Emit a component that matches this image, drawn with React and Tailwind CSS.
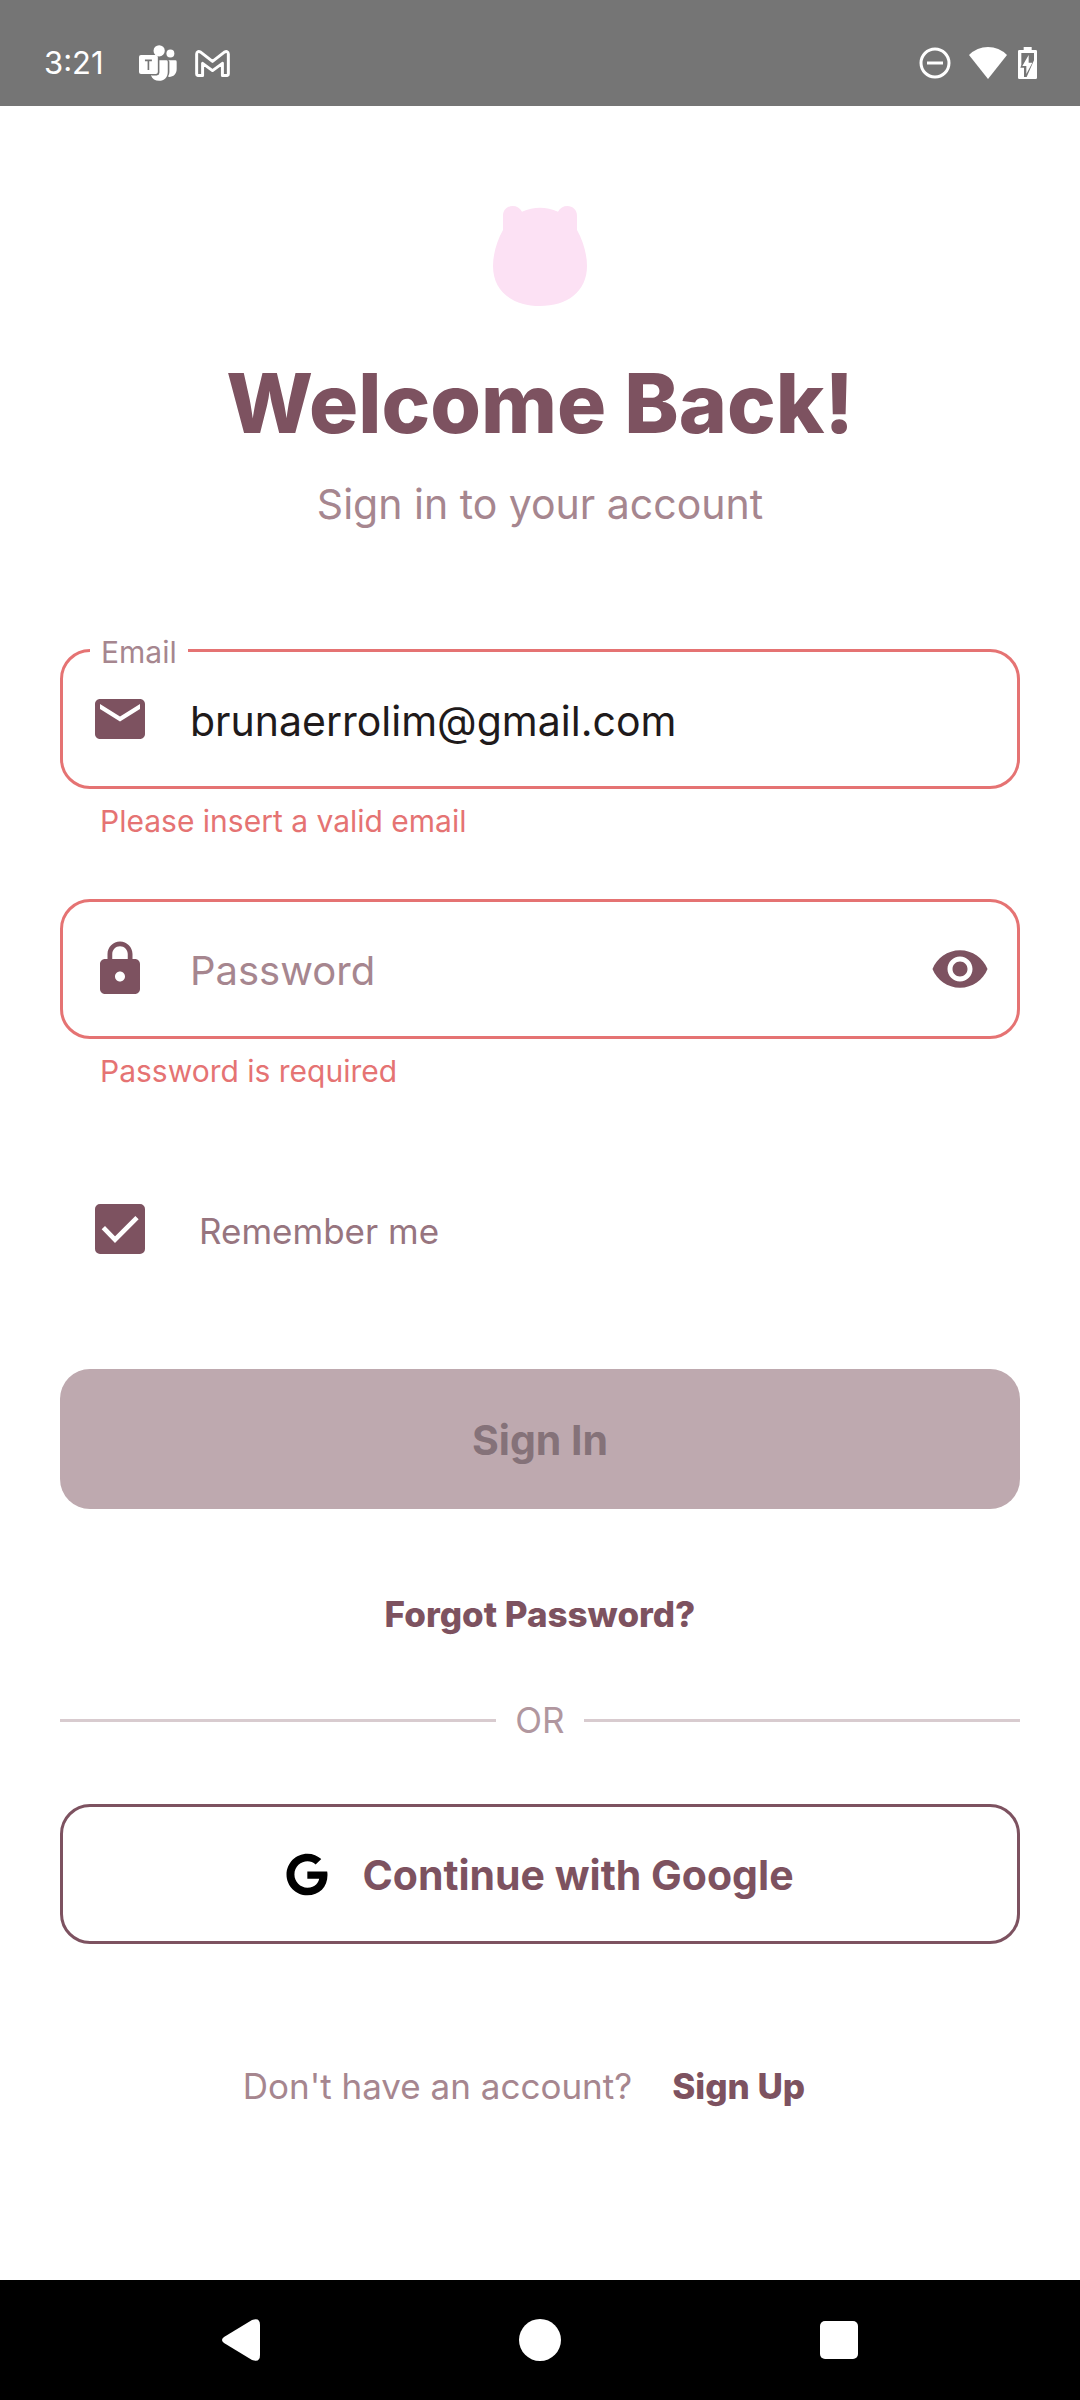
import { useState } from "react";
import { MdEmail, MdLock, MdVisibility } from "react-icons/md";
import { FaGoogle } from "react-icons/fa";

function TeamsIcon() {
  return (
    <svg viewBox="0 0 115 108" className="h-9 w-[38px]" aria-hidden="true">
      <g fill="#fff">
        <circle cx="61" cy="17" r="17" />
        <circle cx="95" cy="25" r="12" />
        <path d="M88 46h22q4 0 4 4v22c0 14-9 24-23 24l-3-1q4-6 4-14V50q0-3-4-4z" />
        <path d="M61 46h22q4 0 4 4v31c0 16-11 27-26 27-12 0-21-6-25-17h17q8 0 8-8z" />
        <rect x="0" y="30" width="57" height="57" rx="6" />
      </g>
      <path d="M60 36v48q0 6-6 6H38" fill="none" stroke="#757575" strokeWidth="3" />
      <path d="M18 46h21M28.500 46v29" fill="none" stroke="#757575" strokeWidth="5" />
    </svg>
  );
}

function MailOutlineIcon() {
  return (
    <svg viewBox="0 0 106 81" className="h-[27px] w-[35px]" aria-hidden="true">
      <path
        d="M5 72V12Q6 1 17 6l36 28L89 6q11-5 12 6v60q0 5-5 5H83V40L53 62 23 40v37H10q-5 0-5-5z"
        fill="none"
        stroke="#fff"
        strokeWidth="9"
        strokeLinejoin="round"
      />
    </svg>
  );
}

function StatusBar() {
  return (
    <header className="flex h-[106px] items-center justify-between bg-[#757575] pr-[43px] pl-11 pt-5 text-white">
      <div className="flex items-center">
        <time className="w-[95px] text-[31px] leading-9">3:21</time>
        <TeamsIcon />
        <span className="ml-[18px]">
          <MailOutlineIcon />
        </span>
      </div>
      <div className="flex items-center">
        <svg viewBox="0 0 32 32" className="h-8 w-8" aria-hidden="true">
          <circle cx="16" cy="16" r="14" fill="none" stroke="#fff" strokeWidth="3" />
          <path d="M8 16h16" stroke="#fff" strokeWidth="3" />
        </svg>
        <svg viewBox="0 0 38 32" className="ml-[18px] h-8 w-[38px]" aria-hidden="true">
          <path d="M0 8Q8 0 19 0t19 8L19 32z" fill="#fff" />
        </svg>
        <svg viewBox="0 0 57 96" className="ml-[11px] h-8 w-[19px]" aria-hidden="true">
          <path d="M17 0h24v9h12q4 0 4 4v79q0 4-4 4H4q-4 0-4-4V13q0-4 4-4h13z" fill="#fff" />
          <path d="M10 18h38v22L26 90h-8V62H7l3-8z" fill="#757575" />
          <path d="M32 24 13 57h12v24l18-34H32z" fill="#fff" />
        </svg>
      </div>
    </header>
  );
}

function Mascot() {
  return (
    <svg viewBox="0 0 282 300" className="h-[100px] w-[94px]" aria-hidden="true">
      <path
        d="M30 72V29C30 12 43 0 59 0c12 0 22 6 28 17Q114 5 141 5t54 12C201 6 211 0 223 0c16 0 29 12 29 29v43c18 31 30 72 30 108 0 78-61 120-141 120S0 258 0 180C0 144 12 103 30 72z"
        fill="#fce1f4"
      />
    </svg>
  );
}

function Field({ id, label, icon: Icon, error, trailing, ...input }) {
  return (
    <div>
      <div className="relative flex h-[140px] items-center rounded-[30px] border-3 border-[#e57373] px-[27px]">
        <label
          htmlFor={id}
          className={
            input.value
              ? "absolute -top-[18px] left-[27px] bg-white px-[11px] text-[30px] leading-9 text-[#a6868f]"
              : "absolute left-[127px] pt-1 text-[40px] leading-12 text-[#a6868f]"
          }
        >
          {label}
        </label>
        <Icon className="h-[60px] w-[60px] shrink-0 text-[#7d5260]" aria-hidden="true" />
        <input
          id={id}
          className="ml-10 min-w-0 flex-1 bg-transparent pt-1 text-[41px] leading-12 text-[#201a1b] outline-none"
          aria-invalid="true"
          aria-describedby={id + "-error"}
          {...input}
        />
        {trailing}
      </div>
      <p id={id + "-error"} className="mt-[14px] ml-10 text-[30px] leading-9 text-[#e57373]">
        {error}
      </p>
    </div>
  );
}

export default function App() {
  const [email, setEmail] = useState("brunaerrolim@gmail.com");
  const [password, setPassword] = useState("");
  const [shown, setShown] = useState(false);
  const [remember, setRemember] = useState(true);

  return (
    <div className="flex min-h-screen flex-col bg-white font-['Inter',sans-serif] text-[#7d5260]">
      <StatusBar />
      <main className="flex flex-1 flex-col px-[60px] pt-[100px]">
        <div className="flex flex-col items-center">
          <Mascot />
          <h1 className="mt-[50px] text-[82px] leading-24 font-extrabold">Welcome Back!</h1>
          <p className="mt-7 text-[41px] leading-12 text-[#a6868f]">Sign in to your account</p>
        </div>

        <form className="mt-[121px] flex flex-col" noValidate onSubmit={(e) => e.preventDefault()}>
          <div className="flex flex-col gap-[60px]">
            <Field
              id="email"
              type="email"
              label="Email"
              icon={MdEmail}
              value={email}
              onChange={(e) => setEmail(e.target.value)}
              error="Please insert a valid email"
            />
            <Field
              id="password"
              type={shown ? "text" : "password"}
              label="Password"
              icon={MdLock}
              value={password}
              onChange={(e) => setPassword(e.target.value)}
              error="Password is required"
              trailing={
                <button type="button" aria-label="Show password" onClick={() => setShown(!shown)}>
                  <MdVisibility className="h-[60px] w-[60px]" />
                </button>
              }
            />
          </div>

          <div className="mt-[115px] flex items-center pl-[35px]">
            <span className="relative flex h-[50px] w-[50px]">
              <input
                id="remember"
                type="checkbox"
                checked={remember}
                onChange={(e) => setRemember(e.target.checked)}
                className="peer h-[50px] w-[50px] appearance-none rounded-[5px] border-4 border-[#7d5260] checked:bg-[#7d5260]"
              />
              <svg
                viewBox="0 0 150 150"
                className="pointer-events-none absolute inset-0 hidden peer-checked:block"
                aria-hidden="true"
              >
                <path d="M25 71l35 36 66-66" fill="none" stroke="#fff" strokeWidth="14" />
              </svg>
            </span>
            <label htmlFor="remember" className="pt-1 pl-[54px] text-[35px] leading-11 text-[#97757f]">
              Remember me
            </label>
          </div>

          <button
            type="submit"
            disabled
            className="mt-[115px] h-[140px] rounded-[30px] bg-[#bea9af] pt-1 text-[41px] font-bold text-[#857279]"
          >
            Sign In
          </button>
        </form>

        <a href="#forgot" className="mt-[83px] self-center text-[35px] leading-11 font-extrabold">
          Forgot Password?
        </a>

        <div className="mt-[62px] flex items-center">
          <hr className="flex-1 border-t-3 border-[#d8cbcf]" />
          <span className="w-[88px] text-center text-[35px] leading-11 text-[#b1979f]">OR</span>
          <hr className="flex-1 border-t-3 border-[#d8cbcf]" />
        </div>

        <button
          type="button"
          className="mt-[62px] flex h-[140px] items-center justify-center gap-[34px] rounded-[30px] border-3 border-[#7d5260] text-[41px] font-bold"
        >
          <FaGoogle className="h-[43px] w-[42px] text-black" aria-hidden="true" />
          <span className="pt-1">Continue with Google</span>
        </button>

        <p className="mt-[120px] flex justify-center pr-8 text-[35px] leading-11 text-[#a6868f]">
          Don't have an account?
          <a href="#signup" className="ml-10 font-extrabold text-[#7d5260]">
            Sign Up
          </a>
        </p>
      </main>

      <nav className="grid h-[120px] grid-cols-3 place-items-center bg-black px-[92px]">
        <button type="button" aria-label="Back">
          <svg viewBox="0 0 38 42" className="h-[42px] w-[38px]" aria-hidden="true">
            <path d="M2 18 30 1q8-3 8 5v30q0 8-8 5L2 24q-4-3 0-6z" fill="#fff" />
          </svg>
        </button>
        <button type="button" aria-label="Home" className="h-[42px] w-[42px] rounded-full bg-white" />
        <button type="button" aria-label="Recent apps" className="h-[38px] w-[38px] rounded-[5px] bg-white" />
      </nav>
    </div>
  );
}
